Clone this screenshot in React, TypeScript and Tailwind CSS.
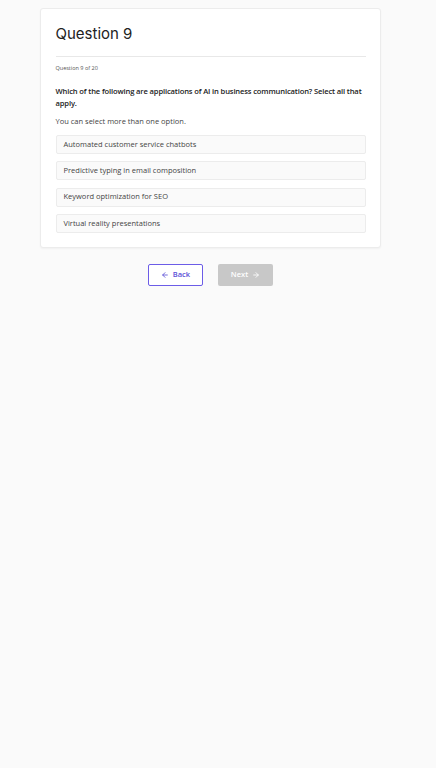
import React from "react";

const options = [
  "Automated customer service chatbots",
  "Predictive typing in email composition",
  "Keyword optimization for SEO",
  "Virtual reality presentations",
];

export default function App() {
  return (
    <div
      className="min-h-[768px] w-full bg-[#fafafa] pt-2"
      style={{ fontFamily: '"Open Sans", "Liberation Sans", sans-serif' }}
    >
      <div className="ml-[40px] w-[341px]">
        <div className="rounded-[3px] border border-[#ececec] bg-white px-[14.5px] pb-[14px] pt-[15px] shadow-[0_1px_2px_rgba(0,0,0,0.04)]">
          <h1
            className="text-[15px] leading-[20px] font-normal text-[#222]"
            style={{ fontFamily: 'Inter, "Liberation Sans", sans-serif' }}
          >
            Question 9
          </h1>
          <div className="mt-[12px] h-px bg-[#e8e8e8]" />
          <div className="mt-[7px] text-[5.5px] leading-[8px] text-[#555]">Question 9 of 20</div>
          <p className="mt-[13px] text-[7.6px] leading-[12px] font-semibold tracking-[-0.14px] text-[#222]">
            Which of the following are applications of AI in business communication? Select all that apply.
          </p>
          <p className="mt-[7px] text-[7.5px] leading-[10px] text-[#444]">You can select more than one option.</p>
          <div className="mt-[9px] flex flex-col gap-[7.3px]">
            {options.map((o) => (
              <div
                key={o}
                className="flex h-[19px] items-center rounded-[2px] border border-[#ececec] bg-[#fafafa] px-[7px] text-[7.5px] text-[#444]"
              >
                {o}
              </div>
            ))}
          </div>
        </div>
        <div className="mt-[16px] flex justify-center gap-[15px]">
          <button className="flex h-[22px] w-[55px] items-center justify-center gap-[4px] rounded-[2px] border border-[#6c5ce7] bg-white text-[7.5px] font-semibold text-[#5b4fd6]">
            <svg width="8" height="8" viewBox="0 0 24 24" fill="none" stroke="currentColor" strokeWidth="2.5" strokeLinecap="round" strokeLinejoin="round">
              <path d="M19 12H5" />
              <path d="M12 19l-7-7 7-7" />
            </svg>
            Back
          </button>
          <button className="flex h-[22px] w-[55px] items-center justify-center gap-[4px] rounded-[2px] bg-[#c8c8c8] text-[7.5px] font-semibold text-white">
            Next
            <svg width="8" height="8" viewBox="0 0 24 24" fill="none" stroke="currentColor" strokeWidth="2.5" strokeLinecap="round" strokeLinejoin="round">
              <path d="M5 12h14" />
              <path d="M12 5l7 7-7 7" />
            </svg>
          </button>
        </div>
      </div>
    </div>
  );
}
